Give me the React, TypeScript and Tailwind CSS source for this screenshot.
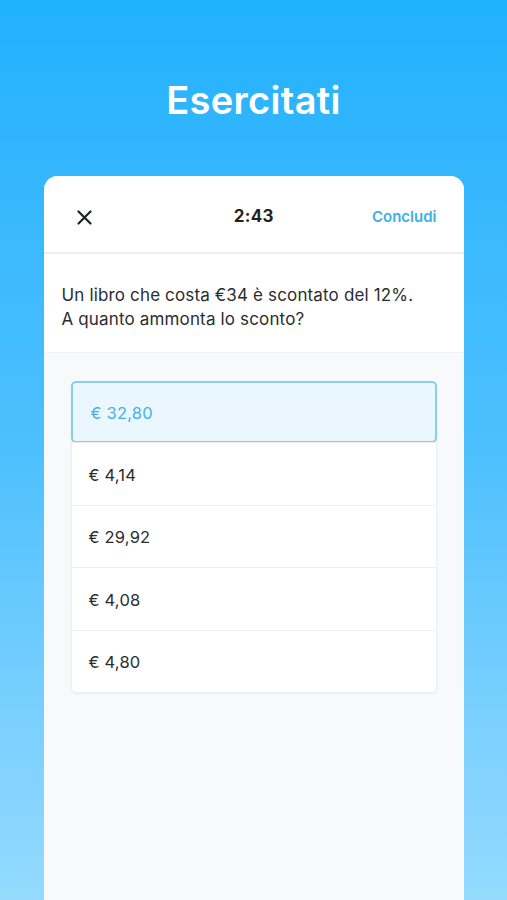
import React from 'react';

const options = ['€ 32,80', '€ 4,14', '€ 29,92', '€ 4,08', '€ 4,80'];

const App: React.FC = () => {
    const selected = 0;

    return (
        <div className="h-[900px] w-full overflow-hidden bg-gradient-to-b from-[#20b1fd] via-[#4cc0fd] to-[#94dafe] flex flex-col items-center" style={{ fontFamily: 'Inter, "Open Sans", sans-serif' }}>
            {/* Title */}
            <h1 className="mt-[76px] text-[38px] leading-[48px] font-semibold text-white tracking-[0.3px]">Esercitati</h1>

            {/* Card */}
            <div className="mt-[52px] w-[420px] flex-1 bg-[#f7f9fb] rounded-t-[14px] overflow-hidden flex flex-col">
                {/* Header */}
                <div className="h-[78px] pt-[6px] bg-white flex items-center justify-between px-[33px] border-b-2 border-[#ebedf0]">
                    <svg width="15" height="15" viewBox="0 0 15 15" className="text-[#1f2225]">
                        <path d="M1.5 1.5 L13.5 13.5 M13.5 1.5 L1.5 13.5" stroke="currentColor" strokeWidth="2.2" strokeLinecap="round" />
                    </svg>
                    <span className="text-[17px] font-bold text-[#1f2225] pl-[44px] tracking-[0.3px]">2:43</span>
                    <span className="text-[15px] font-semibold text-[#3ab0ea] -mr-[6px]">Concludi</span>
                </div>

                {/* Question */}
                <div className="bg-white px-[18px] pt-[29px] pb-[21px] border-b border-[#eef1f4]">
                    <p className="text-[17px] leading-[24px] text-[#2a2d30] tracking-[0.15px]">
                        Un libro che costa €34 è scontato del 12%.<br />A quanto ammonta lo sconto?
                    </p>
                </div>

                {/* Options */}
                <div className="px-[27px] pt-[28px]">
                    <div className="rounded-[5px] bg-white shadow-[0_1px_2px_rgba(0,0,0,0.05)] border border-[#edf0f3]">
                        {options.map((opt, i) => (
                            <div
                                key={opt}
                                className={
                                    i === selected
                                        ? 'h-[62px] -m-px flex items-center pt-[2px] px-[18px] bg-[#eaf7fe] border-2 border-[#86cfee] rounded-[5px] text-[16.5px] text-[#44b2e8] tracking-[0.2px]'
                                        : 'h-[62.5px] flex items-center pt-[3px] px-[17px] border-t border-[#eceef1] text-[16.5px] text-[#2a2d30] tracking-[0.2px]'
                                }
                            >
                                {opt}
                            </div>
                        ))}
                    </div>
                </div>
            </div>
        </div>
    );
};

export default App;
